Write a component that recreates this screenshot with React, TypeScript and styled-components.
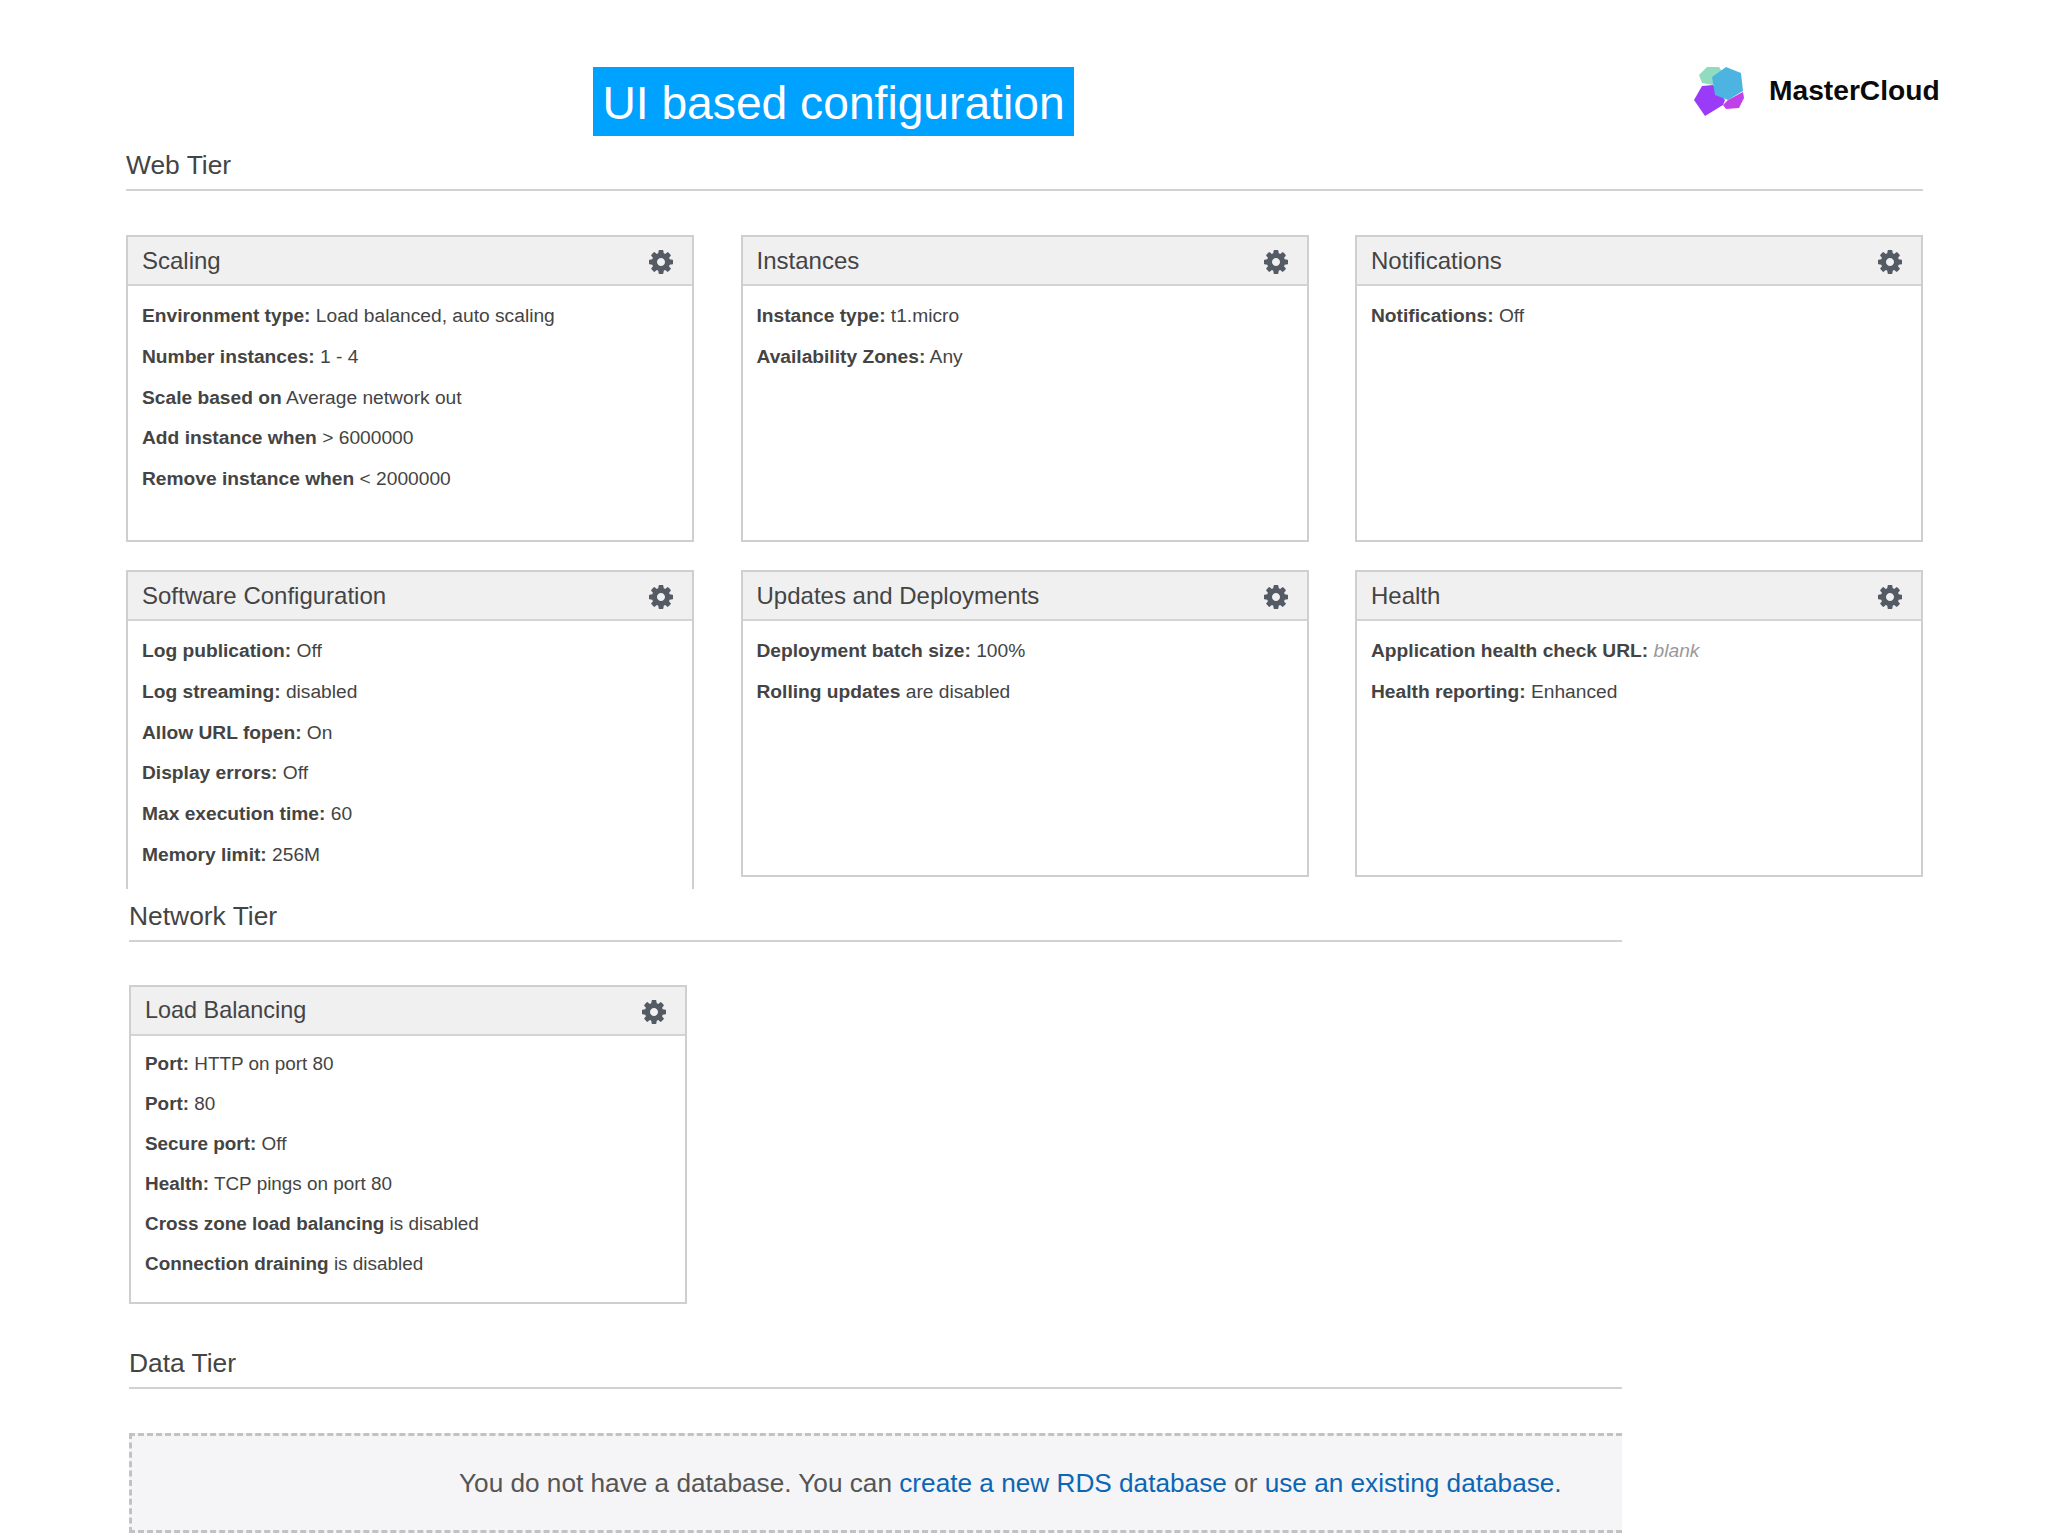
import React from "react";
import styled, { createGlobalStyle } from "styled-components";

const Global = createGlobalStyle`
  html, body { margin: 0; padding: 0; background: #fff; }
  body { font-family: "Liberation Sans", Arial, sans-serif; color: #444; }
`;
const Page = styled.div`
  width: 2048px;
  height: 1536px;
  overflow: hidden;
`;
const TopBar = styled.header`
  display: flex;
  align-items: flex-start;
  height: 78px;
  padding: 60px 0 0 593px;
`;
const Banner = styled.div`
  box-sizing: border-box;
  width: 481px;
  height: 69px;
  margin-top: 7px;
  background: #00a2ff;
  color: #fff;
  font-size: 46.2px;
  line-height: 72px;
  text-align: center;
  white-space: nowrap;
`;
const Brand = styled.div`
  display: flex;
  align-items: center;
  gap: 23px;
  margin-left: 616px;
  height: 60px;
`;
const BrandName = styled.span`
  font-size: 28.2px;
  font-weight: 700;
  color: #0a0a0a;
  white-space: nowrap;
  padding-top: 1px;
`;
const Section = styled.section<{ $left: number; $width: number; $clip?: number; $top?: number }>`
  margin-top: ${(p) => p.$top ?? 0}px;
  margin-left: ${(p) => p.$left}px;
  width: ${(p) => p.$width}px;
  ${(p) => (p.$clip ? `height: ${p.$clip}px; overflow: hidden;` : "")}
`;
const TierHeading = styled.h2<{ $gap?: number }>`
  box-sizing: border-box;
  height: 53px;
  margin: 0 0 ${(p) => p.$gap ?? 44}px;
  border-bottom: 2px solid #d2d2d2;
  font-size: 26.4px;
  font-weight: 400;
  line-height: 54px;
  color: #444;
`;
const CardGrid = styled.div<{ $col: number; $count: number }>`
  display: grid;
  grid-template-columns: repeat(${(p) => p.$count}, ${(p) => p.$col}px);
  justify-content: space-between;
  align-items: start;
  row-gap: 28px;
`;
const CardBox = styled.article<{ $height: number }>`
  box-sizing: border-box;
  border: 2px solid #cfcfcf;
  background: #fff;
  min-height: ${(p) => p.$height}px;
`;
const CardHeader = styled.div`
  display: flex;
  align-items: center;
  justify-content: space-between;
  box-sizing: border-box;
  height: 49px;
  padding: 0 19px 0 14px;
  background: #f0f0f1;
  border-bottom: 2px solid #d4d4d4;
`;
const CardTitle = styled.h3<{ $size: number }>`
  margin: 0;
  font-size: ${(p) => p.$size}px;
  font-weight: 400;
  color: #444;
`;
const GearSvg = styled.svg`
  width: 24px;
  height: 24px;
  margin-top: 2px;
  fill: #545b64;
`;
const CardBody = styled.div<{ $pad: number }>`
  padding: ${(p) => p.$pad}px 14px 0;
`;
const Row = styled.p<{ $size: number; $pitch: number }>`
  margin: 0;
  font-size: ${(p) => p.$size}px;
  line-height: ${(p) => p.$pitch}px;
  color: #444;
  white-space: nowrap;
  b { font-weight: 700; color: #444; }
  i { color: #999; }
`;
const DataBox = styled.div`
  box-sizing: border-box;
  height: 100px;
  padding: 0 0 0 327px;
  border: 3px dashed #c2c2c2;
  border-right: none;
  background: #f5f5f7;
  font-size: 26.2px;
  line-height: 94px;
  color: #555;
  white-space: nowrap;
`;
const LinkText = styled.a`
  color: #0b66b5;
  text-decoration: none;
`;

type CardData = { title: string; rows: React.ReactNode[] };

const web: CardData[] = [
  { title: "Scaling", rows: [
    <><b>Environment type:</b> Load balanced, auto scaling</>,
    <><b>Number instances:</b> 1 - 4</>,
    <><b>Scale based on</b> Average network out</>,
    <><b>Add instance when</b> &gt; 6000000</>,
    <><b>Remove instance when</b> &lt; 2000000</>,
  ] },
  { title: "Instances", rows: [
    <><b>Instance type:</b> t1.micro</>,
    <><b>Availability Zones:</b> Any</>,
  ] },
  { title: "Notifications", rows: [<><b>Notifications:</b> Off</>] },
  { title: "Software Configuration", rows: [
    <><b>Log publication:</b> Off</>,
    <><b>Log streaming:</b> disabled</>,
    <><b>Allow URL fopen:</b> On</>,
    <><b>Display errors:</b> Off</>,
    <><b>Max execution time:</b> 60</>,
    <><b>Memory limit:</b> 256M</>,
    <><b>Zlib output compression:</b> Off</>,
  ] },
  { title: "Updates and Deployments", rows: [
    <><b>Deployment batch size:</b> 100%</>,
    <><b>Rolling updates</b> are disabled</>,
  ] },
  { title: "Health", rows: [
    <><b>Application health check URL:</b> <i>blank</i></>,
    <><b>Health reporting:</b> Enhanced</>,
  ] },
];

const lb: CardData = { title: "Load Balancing", rows: [
  <><b>Port:</b> HTTP on port 80</>,
  <><b>Port:</b> 80</>,
  <><b>Secure port:</b> Off</>,
  <><b>Health:</b> TCP pings on port 80</>,
  <><b>Cross zone load balancing</b> is disabled</>,
  <><b>Connection draining</b> is disabled</>,
] };

function Gear() {
  return (
    <GearSvg viewBox="0 0 1536 1536" aria-hidden="true">
      <path d="M1024 768q0-106-75-181t-181-75-181 75-75 181 75 181 181 75 181-75 75-181zm512-109v222q0 12-8 23t-20 13l-185 28q-19 54-39 91 35 50 107 138 10 12 10 25t-9 23q-27 37-99 108t-94 71q-12 0-26-9l-138-108q-44 23-91 38-16 136-29 186-7 28-36 28h-222q-14 0-24.5-8.5t-11.5-21.5l-28-184q-49-16-90-37l-141 107q-10 9-25 9-14 0-25-11-126-114-165-168-7-10-7-23 0-12 8-23 15-21 51-66.5t54-70.5q-27-50-41-99l-183-27q-13-2-21-12.5t-8-23.5v-222q0-12 8-23t19-13l186-28q14-46 39-92-40-57-107-138-10-12-10-24 0-10 9-23 26-36 98.5-107.5t94.5-71.5q13 0 26 10l138 107q44-23 91-38 16-136 29-186 7-28 36-28h222q14 0 24.5 8.5t11.5 21.5l28 184q49 16 90 37l142-107q9-9 24-9 13 0 25 10 129 119 165 170 7 8 7 22 0 12-8 23-15 21-51 66.5t-54 70.5q26 50 41 98l183 28q13 2 21 12.5t8 23.5z" />
    </GearSvg>
  );
}

function Card({ data, size, pitch, title, height, pad }: { data: CardData; size: number; pitch: number; title: number; height: number; pad: number }) {
  return (
    <CardBox $height={height}>
      <CardHeader>
        <CardTitle $size={title}>{data.title}</CardTitle>
        <Gear />
      </CardHeader>
      <CardBody $pad={pad}>
        {data.rows.map((r, i) => (
          <Row key={i} $size={size} $pitch={pitch}>{r}</Row>
        ))}
      </CardBody>
    </CardBox>
  );
}

function Logo() {
  return (
    <svg width="56" height="60" viewBox="0 0 56 60">
      <polygon points="9,15 17,7 29,7 33,13 23,25 12,23" fill="#8fdcc0" />
      <polygon points="38,40 53,32 54,38 49,48 36,49 33,45" fill="#c040ea" />
      <polygon points="12,26 23,25 35,40 33,45 15,56 4,40" fill="#9a3bf8" />
      <polygon points="22,17 36,7 51,13 53,31 38,40 25,35" fill="#4db4e2" />
    </svg>
  );
}

export default function App() {
  return (
    <Page>
      <Global />
      <TopBar>
        <Banner>UI based configuration</Banner>
        <Brand>
          <Logo />
          <BrandName>MasterCloud</BrandName>
        </Brand>
      </TopBar>
      <Section $left={126} $width={1797} $clip={751}>
        <TierHeading>Web Tier</TierHeading>
        <CardGrid $col={568} $count={3}>
          {web.map((c) => (
            <Card key={c.title} data={c} size={19.2} pitch={40.8} title={24} height={307} pad={10} />
          ))}
        </CardGrid>
      </Section>
      <Section $left={129} $width={1493}>
        <TierHeading $gap={43}>Network Tier</TierHeading>
        <CardGrid $col={558} $count={1}>
          <Card data={lb} size={18.9} pitch={40} title={23.4} height={319} pad={8} />
        </CardGrid>
      </Section>
      <Section $left={129} $width={1493} $top={32}>
        <TierHeading>Data Tier</TierHeading>
        <DataBox>
          You do not have a database. You can <LinkText>create a new RDS database</LinkText> or <LinkText>use an existing database.</LinkText>
        </DataBox>
      </Section>
    </Page>
  );
}
